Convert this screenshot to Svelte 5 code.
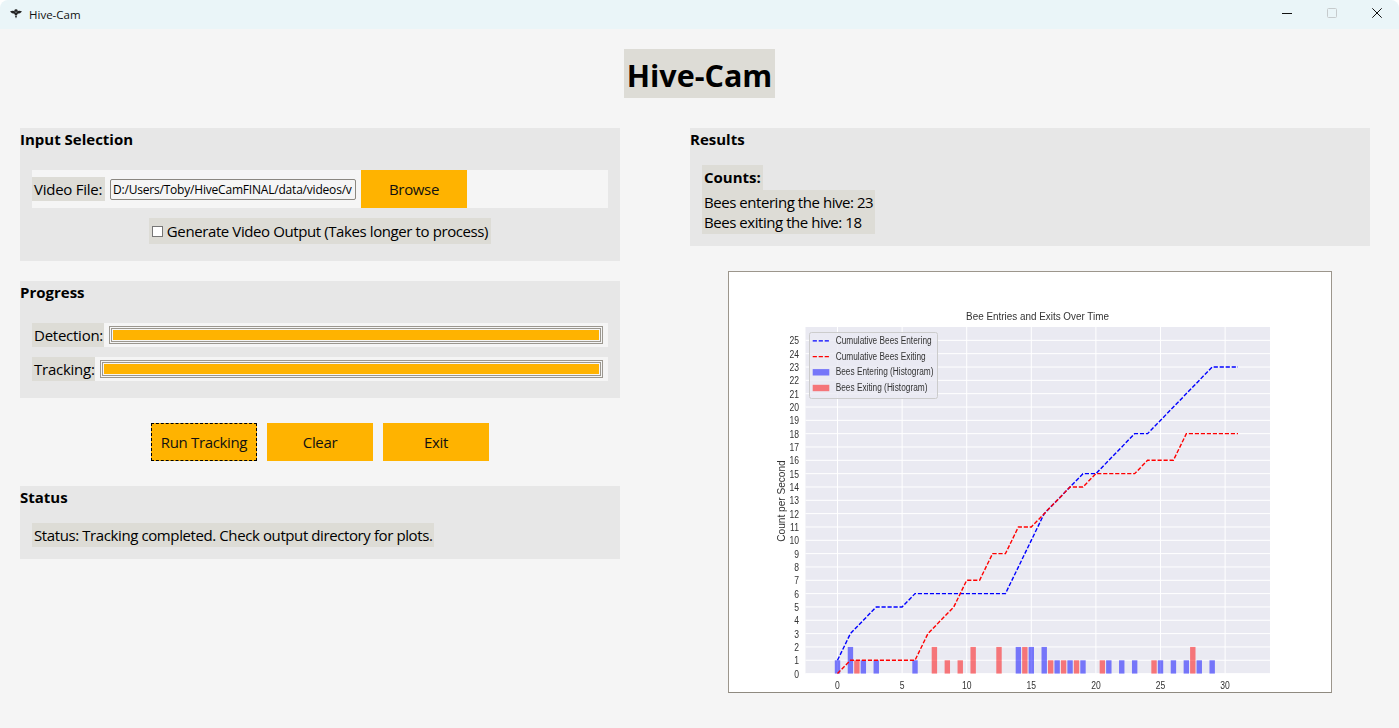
<script>
	const yTicks = Array.from({ length: 26 }, (_, i) => i);
	const xTicks = [0, 5, 10, 15, 20, 25, 30];

	const entering = [[0, 1], [1, 3], [2, 4], [3, 5], [5, 5], [6, 6], [13, 6], [16, 12], [19, 15], [20, 15], [23, 18], [24, 18], [29, 23], [31, 23]];
	const exiting = [[0, 0], [1, 1], [6, 1], [7, 3], [9, 5], [10, 7], [11, 7], [12, 9], [13, 9], [14, 11], [15, 11], [18, 14], [19, 14], [20, 15], [23, 15], [24, 16], [26, 16], [27, 18], [31, 18]];

	const enterBars = [[0, 1], [1, 2], [2, 1], [3, 1], [6, 1], [14, 2], [15, 2], [16, 2], [17, 1], [18, 1], [19, 1], [21, 1], [22, 1], [23, 1], [25, 1], [26, 1], [27, 1], [28, 1], [29, 1]];
	const exitBars = [[1.5, 1], [7.5, 2], [8.5, 1], [9.5, 1], [10.5, 2], [12.5, 2], [14.5, 2], [16.5, 1], [17.5, 1], [18.5, 1], [20.5, 1], [24.5, 1], [27.5, 2]];

	const legend = [
		{ label: 'Cumulative Bees Entering', color: '#0000ff', bar: false },
		{ label: 'Cumulative Bees Exiting', color: '#ff0000', bar: false },
		{ label: 'Bees Entering (Histogram)', color: '#0000ff', bar: true },
		{ label: 'Bees Exiting (Histogram)', color: '#ff0000', bar: true }
	];

	const px = (x) => 108.5 + 12.92 * x;
	const py = (y) => 401.6 - 13.33 * y;
	const linePoints = (pts) => pts.map(([x, y]) => `${px(x)},${py(y)}`).join(' ');
</script>

<div class="window">
	<header class="titlebar">
		<svg class="bee" viewBox="0 0 12 10" width="12" height="10" aria-hidden="true">
			<path d="M0 2.4 Q3 0.8 5.4 2.6 L5.4 4.6 Q2 5 0 2.4Z" fill="#222" />
			<path d="M12 2.4 Q9 0.8 6.6 2.6 L6.6 4.6 Q10 5 12 2.4Z" fill="#222" />
			<ellipse cx="6" cy="1.6" rx="1.6" ry="1.3" fill="#222" />
			<path d="M4.2 3.6 H7.8 L7.2 6 H4.8Z M4.8 6.6 H7.2 L6 9.6Z" fill="#222" />
		</svg>
		<span class="app-name">Hive-Cam</span>
		<div class="win-controls">
			<svg viewBox="0 0 10 10" width="10" height="10" class="minimize" aria-hidden="true"><path d="M0 5.5H10" stroke="#111" stroke-width="1" /></svg>
			<svg viewBox="0 0 10 10" width="10" height="10" class="maximize" aria-hidden="true"><rect x="0.5" y="0.5" width="9" height="9" rx="1" fill="none" stroke="#c6cbcd" /></svg>
			<svg viewBox="0 0 10 10" width="10" height="10" class="close" aria-hidden="true"><path d="M0.3 0.3L9.7 9.7M9.7 0.3L0.3 9.7" stroke="#111" stroke-width="1" /></svg>
		</div>
	</header>

	<main class="content">
		<h1><span>Hive-Cam</span></h1>

		<div class="columns">
			<div class="left">
				<section class="panel">
					<h2>Input Selection</h2>
					<div class="row file-row">
						<span class="label video-label">Video File:</span>
						<input class="path" type="text" readonly value="D:/Users/Toby/HiveCamFINAL/data/videos/v" />
						<button class="action">Browse</button>
					</div>
					<div class="check-wrap">
						<label class="check">
							<input type="checkbox" />
							<span>Generate Video Output (Takes longer to process)</span>
						</label>
					</div>
				</section>

				<section class="panel">
					<h2>Progress</h2>
					<div class="row bar-row">
						<span class="label detect-label">Detection:</span>
						<div class="progress"><div class="fill"></div></div>
					</div>
					<div class="row bar-row">
						<span class="label track-label">Tracking:</span>
						<div class="progress"><div class="fill"></div></div>
					</div>
				</section>

				<div class="actions">
					<button class="action focused">Run Tracking</button>
					<button class="action">Clear</button>
					<button class="action">Exit</button>
				</div>

				<section class="panel tight">
					<h2>Status</h2>
					<span class="label status-line">Status: Tracking completed. Check output directory for plots.</span>
				</section>
			</div>

			<div class="right">
				<section class="panel tight">
					<h2>Results</h2>
					<div class="counts-title">Counts:</div>
					<div class="counts">
						<div>Bees entering the hive: 23</div>
						<div>Bees exiting the hive: 18</div>
					</div>
				</section>

				<div class="plot">
					<svg viewBox="0 0 602 420" width="602" height="420" role="img">
						<rect x="76.5" y="55" width="464.5" height="346.6" fill="#eaeaf2" />
						{#each yTicks as t}
							<line x1="76.5" x2="541" y1={py(t)} y2={py(t)} stroke="#fff" stroke-width="1" />
							<text class="tick" text-anchor="end" transform="translate(70 {py(t) + 4}) scale(.78 1)">{t}</text>
						{/each}
						{#each xTicks as t}
							<line x1={px(t)} x2={px(t)} y1="55" y2="401.6" stroke="#fff" stroke-width="1" />
							<text class="tick" text-anchor="middle" transform="translate({px(t)} 417) scale(.78 1)">{t}</text>
						{/each}

						{#each enterBars as [x, h]}
							<rect x={px(x) - 2.7} y={py(h)} width="5.4" height={h * 13.33} fill="#0000ff" fill-opacity=".5" />
						{/each}
						{#each exitBars as [x, h]}
							<rect x={px(x) - 2.7} y={py(h)} width="5.4" height={h * 13.33} fill="#ff0000" fill-opacity=".5" />
						{/each}

						<polyline points={linePoints(entering)} fill="none" stroke="#0000ff" stroke-width="1.4" stroke-dasharray="4.2 1.8" />
						<polyline points={linePoints(exiting)} fill="none" stroke="#ff0000" stroke-width="1.4" stroke-dasharray="4.2 1.8" />

						<text class="title" text-anchor="middle" transform="translate(308.5 48) scale(.86 1)">Bee Entries and Exits Over Time</text>
						<text class="tick" text-anchor="middle" transform="translate(56 229) rotate(-90) scale(.92 1)">Count per Second</text>

						<rect x="80.5" y="60.5" width="128" height="66" rx="2" fill="#eaeaf2" fill-opacity=".8" stroke="#cccccc" />
						{#each legend as item, i}
							{#if item.bar}
								<rect x="83.7" y={65.7 + i * 15.7} width="16.6" height="6.4" fill={item.color} fill-opacity=".5" />
							{:else}
								<line x1="83.7" x2="100.3" y1={68.9 + i * 15.7} y2={68.9 + i * 15.7} stroke={item.color} stroke-width="1.4" stroke-dasharray="4.2 1.8" />
							{/if}
							<text class="tick" transform="translate(106.7 {72 + i * 15.7}) scale(.755 1)">{item.label}</text>
						{/each}
					</svg>
				</div>
			</div>
		</div>
	</main>
</div>

<style>
	:global(body) {
		background: #fff;
	}
	.window {
		width: 1399px;
		height: 728px;
		overflow: hidden;
		display: flex;
		flex-direction: column;
		font-family: 'Open Sans', 'Noto Sans', sans-serif;
		color: #000;
	}
	.titlebar {
		height: 29px;
		flex: none;
		display: flex;
		align-items: center;
		background: #eaf5f8;
		border-radius: 8px 8px 0 0;
		padding-left: 10px;
	}
	.bee {
		margin-right: 7px;
		margin-top: -1px;
	}
	.app-name {
		font-size: 11.5px;
		color: #111;
	}
	.win-controls {
		margin-left: auto;
		display: flex;
		align-items: center;
		gap: 35px;
		padding-right: 17px;
		margin-top: -3px;
	}
	.content {
		flex: 1;
		background: #f5f5f5;
		display: flex;
		flex-direction: column;
	}
	h1 {
		margin: 20px 0 30px;
		text-align: center;
		font-size: 30.5px;
		height: 49px;
		font-weight: 700;
	}
	h1 span {
		display: inline-block;
		background: #dddcd6;
		padding: 4px 3px 0;
		line-height: 45px;
	}
	.columns {
		display: flex;
		gap: 70px;
		padding-left: 20px;
	}
	.left {
		width: 600px;
		display: flex;
		flex-direction: column;
	}
	.right {
		width: 680px;
		display: flex;
		flex-direction: column;
	}
	.panel {
		background: #e7e7e7;
		padding: 0 12px 17px;
		margin-bottom: 20px;
	}
	.panel.tight {
		padding-bottom: 12px;
		margin-bottom: 0;
	}
	h2 {
		margin: 0 -12px 18px;
		font-size: 15px;
		line-height: 22px;
		padding-bottom: 2px;
		font-weight: 700;
	}
	.tight h2 {
		margin-bottom: 13px;
	}
	.row {
		display: flex;
		align-items: center;
		background: #f5f5f5;
	}
	.label,
	.check {
		display: inline-block;
		background: #dddcd6;
		font-size: 15px;
		letter-spacing: -0.4px;
		line-height: 24px;
		padding: 0 2px;
		white-space: nowrap;
	}
	.video-label,
	.detect-label,
	.track-label {
		box-sizing: border-box;
		flex: none;
		letter-spacing: -0.25px;
	}
	.video-label {
		width: 73px;
	}
	.detect-label {
		width: 72px;
	}
	.track-label {
		width: 63px;
	}
	.file-row {
		height: 38px;
		margin-bottom: 10px;
	}
	.path {
		box-sizing: border-box;
		width: 246px;
		height: 21px;
		margin: 0 5px;
		padding: 0 2px;
		border: 1px solid #8a8780;
		border-radius: 2px;
		background: #f5f5f5;
		font-family: inherit;
		font-size: 12px;
		letter-spacing: -0.2px;
		color: #000;
		outline: none;
	}
	.action {
		box-sizing: border-box;
		width: 106px;
		height: 38px;
		padding: 0;
		border: none;
		background: #ffb300;
		font-family: inherit;
		font-size: 15px;
		letter-spacing: -0.35px;
		color: #111;
	}
	.focused {
		border: 1px dashed #000;
	}
	.check-wrap {
		display: flex;
		justify-content: center;
	}
	.check {
		display: flex;
		align-items: center;
		height: 26px;
		padding: 0 3px;
	}
	.check input {
		appearance: none;
		box-sizing: border-box;
		width: 11px;
		height: 11px;
		margin: 0 4px 0 0;
		background: #fff;
		border: 1px solid #777;
	}
	.bar-row {
		height: 24px;
		padding-right: 5px;
		gap: 5px;
		margin-bottom: 10px;
	}
	.bar-row:last-child {
		margin-bottom: 0;
	}
	.progress {
		flex: 1;
		box-sizing: border-box;
		height: 18px;
		padding: 1px;
		border: 1px solid #9b978f;
		background: #f5f5f5;
	}
	.fill {
		box-sizing: border-box;
		height: 100%;
		border: 1px solid #9b978f;
		padding: 1px;
		background: #ffb300 content-box;
	}
	.actions {
		display: flex;
		justify-content: center;
		gap: 10px;
		margin: 5px 0 25px;
	}
	.counts-title {
		width: fit-content;
		background: #dddcd6;
		font-size: 15px;
		font-weight: 700;
		line-height: 25px;
		padding: 0 2px;
	}
	.counts {
		width: fit-content;
		background: #dddcd6;
		font-size: 15px;
		letter-spacing: -0.45px;
		line-height: 20px;
		padding: 2px 2px;
	}
	.plot {
		box-sizing: border-box;
		width: 604px;
		height: 422px;
		margin: 25px 0 0 38px;
		border: 1px solid #9c968c;
		border-bottom-color: #8f8a80;
		background: #fff;
	}
	.plot svg {
		display: block;
		filter: blur(0.3px);
	}
	.tick,
	.title {
		font-family: 'Liberation Sans', Arial, sans-serif;
		fill: #333;
	}
	.tick {
		font-size: 11px;
	}
	.title {
		font-size: 11.5px;
	}
</style>
